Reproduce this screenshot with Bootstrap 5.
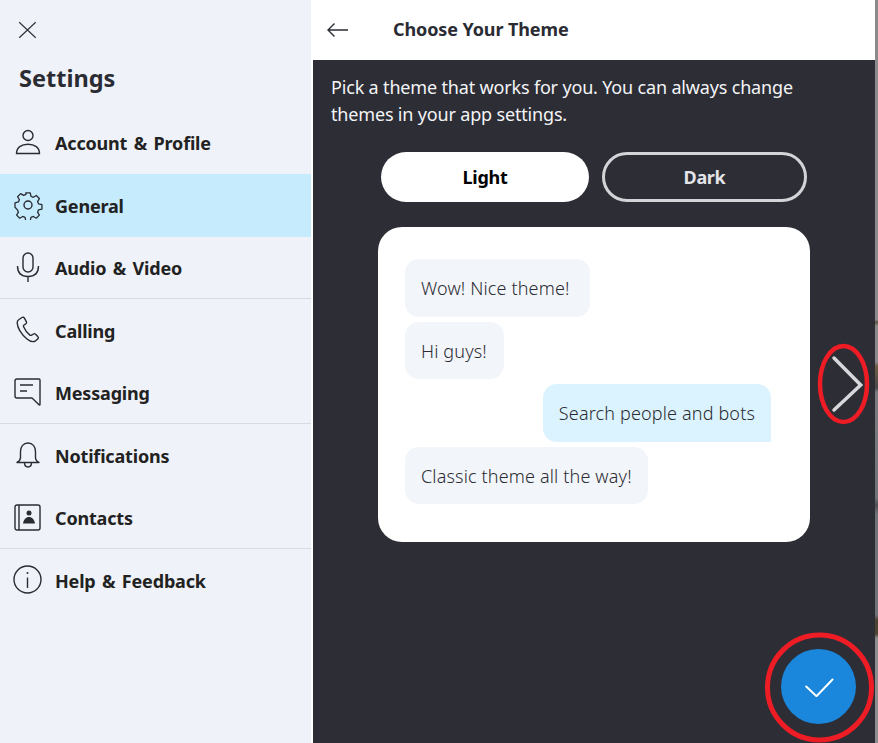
<!DOCTYPE html>
<html lang="en">
<head>
<meta charset="utf-8">
<title>Choose Your Theme</title>
<link rel="stylesheet" href="https://cdn.jsdelivr.net/npm/bootstrap@5.3.0/dist/css/bootstrap.min.css">
<style>
html,body{height:743px;overflow:hidden}
body{font-family:"Noto Sans","Open Sans",sans-serif;background:#6b6f78;color:#2b2c33}
.shell{position:relative;width:878px;height:743px}
.side{width:313px;background:#eff2f8;border-right:2px solid #fff;flex:none}
.close-row{height:59px;padding:20px 0 0 18px}
.side-title{font-size:23.5px;font-weight:700;line-height:30px;margin:4px 0 0 19px;color:#2b2c33}
.nav-list{margin-top:18.5px}
.nav-entry{height:62.5px;display:flex;align-items:center;color:#222;font-size:18px;font-weight:700;letter-spacing:-.18px;word-spacing:2px;border-bottom:1px solid transparent}
.nav-entry.sep{border-bottom-color:#d8dbe2}
.nav-entry.active{background:#c5ebfc}
.nav-ico{width:55px;flex:none;display:flex;justify-content:center}
.nav-txt{padding-top:3px}
.main{background:#2c2d35;min-width:0}
.top-bar{height:60px;background:#fff;padding:0 0 2px 13px;gap:43px}
.back-ico{margin-top:2px}
.top-title{font-size:18px;font-weight:700;letter-spacing:-.11px;color:#2b2c33}
.intro{color:#f4f4f6;font-size:18px;line-height:27px;letter-spacing:-.17px;margin:14px 0 0 18px}
.theme-pills{margin:24px 0 0 68px;gap:13px}
.pill-item{height:50px;border-radius:25px;font-size:18px;font-weight:700;letter-spacing:-.3px;display:flex;align-items:center;justify-content:center;padding:0}
.pill-light{width:208px;background:#fff;color:#000;border:0}
.pill-dark{width:205px;background:transparent;color:#e4e4e8;border:3px solid #d3d3d8}
.preview{width:432px;height:315px;background:#fff;border-radius:24px;margin:25px 0 0 65px;padding:32px 39px 0 27px}
.bub{height:57.5px;margin-bottom:5px;border-radius:14px;background:#f2f5f9;color:#2b2c33;font-size:18px;font-weight:300;letter-spacing:.15px;padding:2px 16px 0;display:flex;align-items:center;width:max-content}
.bub.mine{background:#dbf3fe;margin-left:auto;border-bottom-right-radius:0}
.bub-wide{min-width:185px}
.bub-mid{min-width:99px}
.chev{position:absolute;left:828px;top:352px}
.done{position:absolute;left:781px;top:649px;width:75px;height:75px;border-radius:50%;background:#1a87dc;display:flex;align-items:center;justify-content:center;padding:0;border:0}
.mark-ring{position:absolute;left:0;top:0;pointer-events:none}
.edge{width:3px;flex:none;background:linear-gradient(180deg,#8b8b8b 0,#8b8b8b 320px,#5a5040 322px,#8a8a8a 326px,#8a8a8a 362px,#6e5f45 366px,#4a4a4a 388px,#7a7c80 392px,#6f7378 498px,#4d4f52 505px,#6f7378 514px,#6f7378 615px,#4e4433 620px,#4e4433 634px,#8d8d8d 638px,#8d8d8d 743px)}
</style>
</head>
<body>
<div class="shell d-flex">
  <aside class="side">
    <div class="close-row">
      <svg class="d-block" width="19" height="19" viewBox="0 0 19 19" fill="none" stroke="#33343a" stroke-width="1.2"><path d="M1.2 2.300 17.700 17.700M17.700 2.300 1.200 17.700"/></svg>
    </div>
    <div class="side-title">Settings</div>
    <div class="nav-list">
      <div class="nav-entry"><span class="nav-ico"><svg width="28" height="28" viewBox="0 0 28 28" fill="none" stroke="#2b2c33" stroke-width="1.4"><circle cx="14" cy="7.500" r="5"/><path d="M2.500 25.500c0-6 4.800-9.300 11.500-9.300s11.500 3.300 11.500 9.300z"/></svg></span><span class="nav-txt">Account &amp; Profile</span></div>
      <div class="nav-entry active"><span class="nav-ico"><svg width="30" height="30" viewBox="0 0 30 30" fill="none" stroke="#2b2c33" stroke-width="1.4" stroke-linejoin="round"><circle cx="15" cy="15" r="4"/><path d="M12.600 2h4.800l.8 3.600 2.500 1.100 3.200-1.900 3.300 3.300-1.900 3.200 1 2.400 3.700.9v4.800l-3.700.9-1 2.400 1.900 3.200-3.300 3.300-3.200-1.900-2.500 1-.8 3.700h-4.800l-.8-3.700-2.500-1-3.200 1.900-3.300-3.300 1.900-3.200-1-2.400L1 17.400v-4.800l3.700-.9 1-2.400-1.900-3.200 3.300-3.300 3.200 1.900 2.500-1.100z" transform="translate(15 15) scale(.93) translate(-15 -15)"/></svg></span><span class="nav-txt">General</span></div>
      <div class="nav-entry sep"><span class="nav-ico"><svg width="24" height="30" viewBox="0 0 24 30" fill="none" stroke="#2b2c33" stroke-width="1.4"><rect x="7" y="1" width="10" height="19" rx="5"/><path d="M1.500 14c0 7 4 10.500 10.500 10.500S22.500 21 22.500 14M12 24.500V30"/></svg></span><span class="nav-txt">Audio &amp; Video</span></div>
      <div class="nav-entry"><span class="nav-ico"><svg width="24" height="28" viewBox="0 0 24 28" fill="none" stroke="#2b2c33" stroke-width="1.4" stroke-linejoin="round"><path d="M3 3.500 6 1.500c1-.6 1.900-.3 2.400.6l1.900 3.600c.4.800.2 1.600-.5 2.100L8 9c-.6.500-.7 1.100-.4 1.800 1.300 3.200 3.400 6 6.300 8.300.6.400 1.200.4 1.800 0l1.700-1.100c.7-.5 1.500-.4 2.100.2l2.300 2.400c.7.800.7 1.700-.1 2.400l-2.100 1.800C17 26.500 14 25.500 11 23 5 18 1 11 1.200 6.500c0-1.200.7-2.300 1.800-3z"/></svg></span><span class="nav-txt">Calling</span></div>
      <div class="nav-entry sep"><span class="nav-ico"><svg width="27" height="28" viewBox="0 0 27 28" fill="none" stroke="#2b2c33" stroke-width="1.4" stroke-linejoin="round"><path d="M3 1h22c.6 0 1 .4 1 1v24.500c0 .5-.6.700-1 .3L18 20H3c-1.100 0-2-.9-2-2V3c0-1.100.9-2 2-2z"/><path d="M6 7h13M6 13h7"/></svg></span><span class="nav-txt">Messaging</span></div>
      <div class="nav-entry"><span class="nav-ico"><svg width="24" height="26" viewBox="0 0 24 26" fill="none" stroke="#2b2c33" stroke-width="1.4" stroke-linejoin="round"><path d="M1 20.500c2-1 3.500-2.500 3.500-5V9.500C4.500 4.500 7.500 1 12 1s7.500 3.500 7.500 8.500v6c0 2.500 1.500 4 3.500 5z"/><path d="M8.500 20.500c0 3 1.500 4.500 3.500 4.500s3.500-1.500 3.500-4.500"/></svg></span><span class="nav-txt">Notifications</span></div>
      <div class="nav-entry sep"><span class="nav-ico"><svg width="27" height="27" viewBox="0 0 27 27" fill="none" stroke="#2b2c33" stroke-width="1.4"><rect x="1" y="1" width="25" height="25" rx="2"/><path d="M5 1v25"/><circle cx="15" cy="9" r="2.500" fill="#2b2c33" stroke="none"/><path d="M9 19.500c.7-4 2.900-6.500 6-6.500s5.300 2.500 6 6.500z" fill="#2b2c33" stroke="none"/></svg></span><span class="nav-txt">Contacts</span></div>
      <div class="nav-entry"><span class="nav-ico"><svg width="29" height="29" viewBox="0 0 29 29" fill="none" stroke="#2b2c33" stroke-width="1.4"><circle cx="14.500" cy="14.500" r="13.500"/><path d="M14.500 12.500V23"/><circle cx="14.500" cy="8" r="1" fill="#2b2c33" stroke="none"/></svg></span><span class="nav-txt">Help &amp; Feedback</span></div>
    </div>
  </aside>
  <main class="main flex-grow-1">
    <div class="top-bar d-flex align-items-center">
      <svg class="back-ico" width="24" height="16" viewBox="0 0 24 16" fill="none" stroke="#2b2c33" stroke-width="1.4"><path d="M22 8H2M8.500 1.500 2 8l6.500 6.500"/></svg>
      <div class="top-title">Choose Your Theme</div>
    </div>
    <p class="intro">Pick a theme that works for you. You can always change<br>themes in your app settings.</p>
    <div class="theme-pills d-flex">
      <button type="button" class="btn pill-item pill-light">Light</button>
      <button type="button" class="btn pill-item pill-dark">Dark</button>
    </div>
    <div class="preview">
      <div class="bub bub-wide">Wow! Nice theme!</div>
      <div class="bub bub-mid">Hi guys!</div>
      <div class="bub mine">Search people and bots</div>
      <div class="bub">Classic theme all the way!</div>
    </div>
  </main>
  <div class="edge"></div>
  <svg class="chev" width="36" height="66" viewBox="0 0 36 66" fill="none" stroke="#d8d8dc" stroke-width="3.500" stroke-linecap="round"><path d="M6 6 32.700 33 6 58"/></svg>
  <button type="button" class="btn done" aria-label="Confirm"><svg width="30" height="20" viewBox="0 0 30 20" fill="none" stroke="#fff" stroke-width="2" stroke-linecap="round"><path d="M2.200 9.500 12.500 19.200 28.500 2.500"/></svg></button>
  <svg class="mark-ring" width="878" height="743" viewBox="0 0 878 743" fill="none" stroke="#ee1c25" stroke-width="4.500"><ellipse cx="843.500" cy="384" rx="23.500" ry="38"/><ellipse cx="819.500" cy="687.500" rx="52" ry="52.500" stroke-width="5"/></svg>
</div>
</body>
</html>
